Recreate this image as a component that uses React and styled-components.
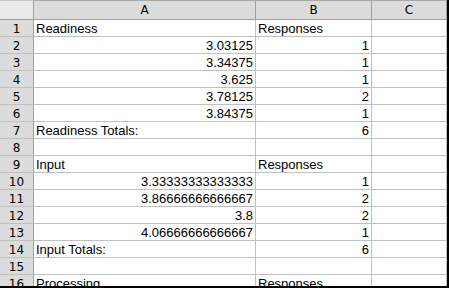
import styled, { createGlobalStyle } from "styled-components";

const Global = createGlobalStyle`
  html, body { margin: 0; padding: 0; background: #ffffff; }
`;

const cols = [
  { key: "A", width: 222 },
  { key: "B", width: 116 },
  { key: "C", width: 75 },
];

const rows = [
  ["Readiness", "Responses"],
  [3.03125, 1],
  [3.34375, 1],
  [3.625, 1],
  [3.78125, 2],
  [3.84375, 1],
  ["Readiness Totals:", 6],
  ["", ""],
  ["Input", "Responses"],
  ["3.33333333333333", 1],
  ["3.86666666666667", 2],
  [3.8, 2],
  ["4.06666666666667", 1],
  ["Input Totals:", 6],
  ["", ""],
  ["Processing", "Responses"],
];

const Sheet = styled.div`
  width: 449px;
  height: 288px;
  box-sizing: border-box;
  border-right: 2px solid #000;
  border-bottom: 2px solid #000;
  overflow: hidden;
  background: #fff;
`;

const Grid = styled.div`
  display: grid;
  grid-template-columns: 34px 222px 116px 75px;
  grid-template-rows: 20px;
  grid-auto-rows: 17px;
`;

const Corner = styled.div`
  box-sizing: border-box;
  background: #ebebeb;
  border-right: 1px solid #a0a0a0;
  border-bottom: 1px solid #a0a0a0;
  border-top: 1px solid #c8c8c8;
`;

const ColHead = styled.div`
  box-sizing: border-box;
  background: #dcdcdc;
  border-right: 1px solid #a0a0a0;
  border-bottom: 1px solid #a0a0a0;
  border-top: 1px solid #a8a8a8;
  display: flex;
  align-items: center;
  justify-content: center;
  font-family: "DejaVu Sans", sans-serif;
  font-size: 12px;
  color: #000;
`;

const RowHead = styled.div`
  box-sizing: border-box;
  background: #dcdcdc;
  border-right: 1px solid #a0a0a0;
  border-bottom: 1px solid #c0c0c0;
  display: flex;
  align-items: center;
  justify-content: center;
  padding-top: 1px;
  font-family: "DejaVu Sans", sans-serif;
  font-size: 12px;
  color: #000;
`;

const Cell = styled.div`
  box-sizing: border-box;
  border-right: 1px solid #c0c0c0;
  border-bottom: 1px solid #c0c0c0;
  padding: 0 2px 0 2px;
  font-family: "Liberation Sans", Arial, sans-serif;
  font-size: 13px;
  line-height: 17px;
  color: #000;
  white-space: nowrap;
  overflow: hidden;
  text-align: ${(p) => (p.$num ? "right" : "left")};
`;

export default function App() {
  return (
    <>
      <Global />
      <Sheet>
        <Grid>
          <Corner />
          {cols.map((c) => (
            <ColHead key={c.key}>{c.key}</ColHead>
          ))}
          {rows.map((r, i) => (
            <Row key={i} n={i + 1} cells={r} />
          ))}
        </Grid>
      </Sheet>
    </>
  );
}

function Row({ n, cells }) {
  const isNum = (v) => typeof v === "number" || /^[0-9.]+$/.test(String(v));
  return (
    <>
      <RowHead>{n}</RowHead>
      <Cell $num={isNum(cells[0])}>{cells[0]}</Cell>
      <Cell $num={isNum(cells[1])}>{cells[1]}</Cell>
      <Cell />
    </>
  );
}
